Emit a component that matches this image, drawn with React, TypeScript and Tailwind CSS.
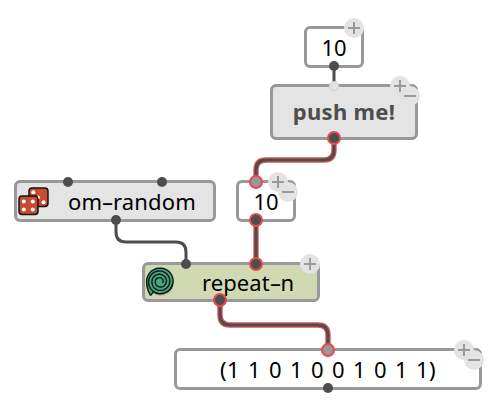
import type { ReactNode } from "react";

function Box({ className, children }: { className: string; children: ReactNode }) {
  return (
    <div
      className={`absolute flex items-center justify-center rounded-[6px] border-[3px] border-[#999999] text-[22px] leading-none whitespace-pre ${className}`}
    >
      {children}
    </div>
  );
}

function Hyphen() {
  return <span className="mx-[1.7px] inline-block scale-x-[1.7]">-</span>;
}

function Port({ x, y, hot, fill = "#4d4d4d" }: { x: number; y: number; hot?: boolean; fill?: string }) {
  return hot ? (
    <circle cx={x} cy={y} r={6} fill={fill} stroke="#e54b50" strokeWidth={2} />
  ) : (
    <circle cx={x} cy={y} r={5} fill={fill} />
  );
}

function Handle({ x, y, minus }: { x: number; y: number; minus?: boolean }) {
  return (
    <g>
      <circle cx={x} cy={y} r={10} fill="#e3e3e3" />
      <path d={`M${x - 6} ${y}h12${minus ? "" : `M${x} ${y - 6}v12`}`} stroke="#999" strokeWidth={2} />
    </g>
  );
}

function HotWire({ d }: { d: string }) {
  return (
    <g fill="none">
      <path d={d} stroke="#e05357" strokeWidth={5.4} />
      <path d={d} stroke="#4d4d4d" strokeWidth={3} />
    </g>
  );
}

function Dice() {
  return (
    <svg className="absolute left-[0.6px] top-[3.6px]" width="32" height="30" viewBox="0 0 32 30">
      <g fill="#c84a32" stroke="#151515" strokeWidth="1.5">
        <rect x="11" y="1" width="19" height="18.5" rx="3.2" />
        <rect x="1" y="9" width="19" height="18.5" rx="3.2" />
      </g>
      <g fill="#fff">
        <circle cx="15.3" cy="5.3" r="2" />
        <path d="M19.5 8.5a2 2 0 0 1 1.8 3.4l-.8-.2z" />
        <circle cx="25.5" cy="15.2" r="2" />
        <circle cx="5.8" cy="14.4" r="2" />
        <circle cx="14.8" cy="14.4" r="2" />
        <circle cx="5.8" cy="22.6" r="2" />
        <circle cx="14.8" cy="22.6" r="2" />
      </g>
    </svg>
  );
}

const coil = Array.from({ length: 145 }, (_, i) => {
  const t = i / 144;
  const angle = Math.PI * (0.95 + 7.2 * t);
  const radius = t < 0.12 ? 13.4 : 13.4 - (10.6 * (t - 0.12)) / 0.88;
  return `L${(15 + radius * Math.cos(angle)).toFixed(2)} ${(15.5 + radius * Math.sin(angle)).toFixed(2)}`;
}).join("");

function Spiral() {
  return (
    <svg className="absolute left-0 top-[0.5px]" width="32" height="34" viewBox="0 0 32 34" fill="none">
      <path d="M9 28Q21 33 28 22" stroke="#bfc3b2" strokeWidth="1.5" />
      <path d="M5.5 29.5Q1.3 22 1.6 15.5A13.4 13.4 0 0 1 28.4 15.5A12.5 11.5 0 0 1 9 26Z" fill="#4ba47a" />
      <path d={`M5.5 29.5Q1.8 23 1.6 17${coil}`} stroke="#101a15" strokeWidth="1.4" />
      <path d="M5.5 29.5L8.5 26Q13 29 19.5 27Q26 25 27.5 18" stroke="#101a15" strokeWidth="1.3" />
    </svg>
  );
}

export default function App() {
  return (
    <main className="relative h-[408px] w-[500px] overflow-hidden bg-white font-['Noto_Sans',sans-serif] text-black">
      <Box className="left-[304px] top-[26px] h-[42px] w-[60px] bg-white">
        <span>10</span>
      </Box>
      <Box className="left-[270px] top-[84px] h-[56px] w-[148px] bg-[#e4e4e4] font-bold text-[#4d4d4d]">
        <span className="relative -top-[1px] tracking-[0.3px]">push me!</span>
      </Box>
      <Box className="left-[14px] top-[180px] h-[42px] w-[202px] bg-[#e4e4e4]">
        <Dice />
        <span className="ml-[34px] tracking-[0.2px]">om<Hyphen />random</span>
      </Box>
      <Box className="left-[236px] top-[180px] h-[42px] w-[60px] bg-white">
        <span>10</span>
      </Box>
      <Box className="left-[142px] top-[262px] h-[40px] w-[178px] bg-[#d1d9b3]">
        <Spiral />
        <span className="ml-[34px] tracking-[0.1px]">repeat<Hyphen />n</span>
      </Box>
      <Box className="left-[174px] top-[348px] h-[42px] w-[308px] bg-white">
        <span className="tracking-[0.4px] [word-spacing:1.9px]">(1 1 0 1 0 0 1 0 1 1)</span>
      </Box>
      <svg className="absolute inset-0" width="500" height="408" viewBox="0 0 500 408">
        <g fill="none" stroke="#4d4d4d" strokeWidth="3">
          <path d="M334 66V86" />
          <path d="M116 220V232Q116 242 126 242H176Q186 242 186 252V264" />
        </g>
        <HotWire d="M334 138V150Q334 160 324 160H266Q256 160 256 170V182" />
        <HotWire d="M256 220V264" />
        <HotWire d="M220 300V315Q220 325 230 325H318Q328 325 328 335V350" />
        <Port x={334} y={66} />
        <circle cx="334" cy="86" r="4.8" fill="#e4e4e4" stroke="#bfc5ca" strokeWidth=".7" />
        <Port x={334} y={138} hot />
        <Port x={68} y={182} />
        <Port x={162} y={182} />
        <Port x={116} y={220} />
        <Port x={256} y={182} hot fill="#999" />
        <Port x={256} y={220} hot />
        <Port x={186} y={264} />
        <Port x={256} y={264} hot />
        <Port x={220} y={300} hot />
        <Port x={328} y={350} hot fill="#999" />
        <Port x={328} y={388} />
        <Handle x={354} y={28} />
        <Handle x={400} y={86} />
        <Handle x={410} y={96} minus />
        <Handle x={278} y={182} />
        <Handle x={288} y={192} minus />
        <Handle x={310} y={264} />
        <Handle x={464} y={350} />
        <Handle x={474} y={360} minus />
      </svg>
    </main>
  );
}
